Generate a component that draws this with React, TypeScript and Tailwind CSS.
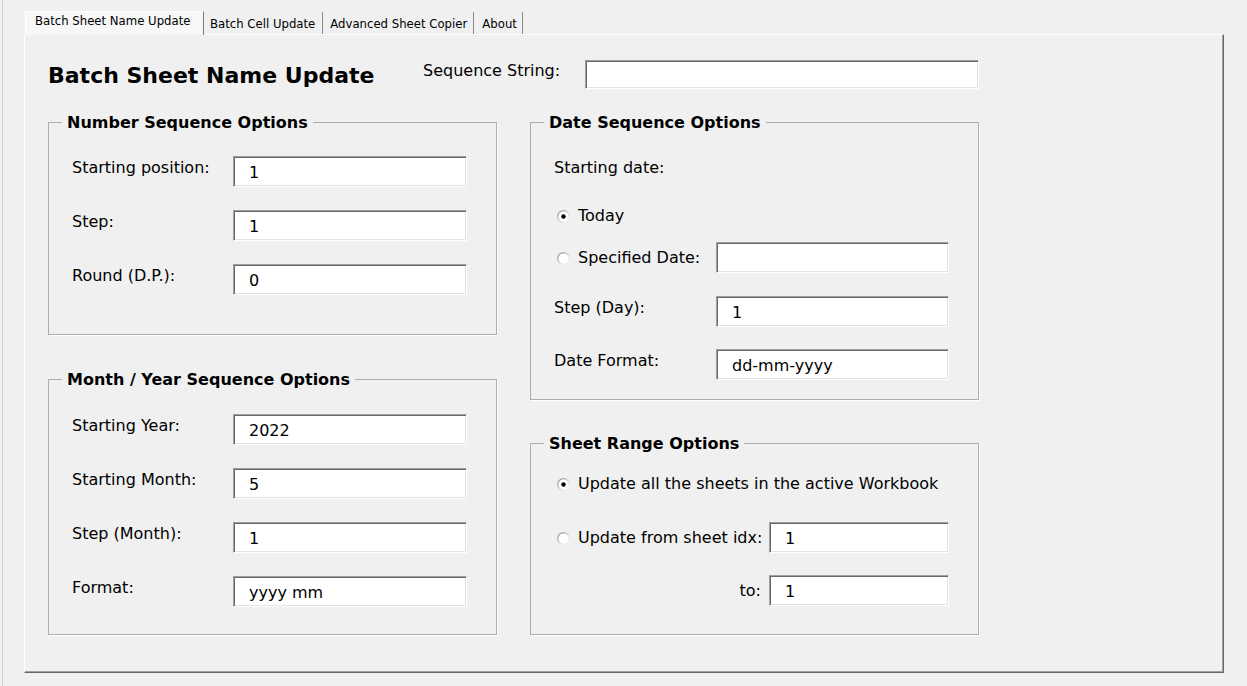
import React from 'react';

const body = 'font-["DejaVu_Sans",sans-serif]';
const tabFont = 'font-["DejaVu_Sans_Condensed","DejaVu_Sans",sans-serif]';

const Field: React.FC<{ value?: string; w?: string; h?: string }> = ({ value = '', w = 'w-[234px]', h = 'h-[31px]' }) => (
  <div
    className={`${h} ${w} shrink-0 bg-white border border-t-[#a0a0a0] border-l-[#a0a0a0] border-b-white border-r-white shadow-[inset_1px_1px_0_#696969,inset_-1px_-1px_0_#e3e3e3] pl-[15px] pt-[2px] flex items-center text-[16px] leading-none text-black`}
  >
    {value}
  </div>
);

const Radio: React.FC<{ checked?: boolean; id: string }> = ({ checked, id }) => (
  <svg width="13" height="13" viewBox="0 0 13 13" className="shrink-0">
    <defs>
      <linearGradient id={id} x1="0" y1="0" x2="1" y2="1">
        <stop offset="0" stopColor="#8a8a8a" />
        <stop offset="0.55" stopColor="#d6d6d6" />
        <stop offset="1" stopColor="#ffffff" />
      </linearGradient>
    </defs>
    <circle cx="6.5" cy="6.5" r="5.8" fill="#fff" stroke={`url(#${id})`} strokeWidth="1.3" />
    {checked && <circle cx="6.5" cy="6.5" r="2.2" fill="#000" />}
  </svg>
);

const Row: React.FC<{ label: string; value: string }> = ({ label, value }) => (
  <div className="flex items-start">
    <span className="w-[161px] mt-[2px] text-[16px] leading-[20px]">{label}</span>
    <Field value={value} />
  </div>
);

const Group: React.FC<{ title: string; className?: string; children: React.ReactNode }> = ({ title, className = '', children }) => (
  <fieldset className={`border border-[#adadad] shadow-[1px_1px_0_#fff] ${className}`}>
    <legend className="relative top-[1px] ml-[13px] px-[5px] text-[16px] font-bold leading-[20px]">{title}</legend>
    {children}
  </fieldset>
);

export default function App() {
  return (
    <div className={`h-[686px] w-[1247px] bg-[#f0f0f0] text-black ${body} overflow-hidden`}>
      <div className="ml-[2px] h-full border-l border-[#d2d2d2] pl-[21px] pt-[10px]">
        {/* Tabs */}
        <div className={`flex items-end h-[24px] text-[13px] leading-none pl-[1px] ${tabFont}`}>
          <div className="relative z-10 h-[24px] w-[179px] -mb-[1px] bg-[#f7f7f7] border-l border-t border-white border-r border-r-[#7a7a7a] pl-[9px] pt-[2px]">
            Batch Sheet Name Update
          </div>
          <div className="h-[22px] border-r border-[#8a8a8a] pl-[6px] pr-[7px] pt-[5px]">Batch Cell Update</div>
          <div className="h-[22px] border-r border-[#8a8a8a] pl-[7px] pr-[6px] pt-[5px]">Advanced Sheet Copier</div>
          <div className="h-[22px] border-r border-[#8a8a8a] pl-[8px] pr-[5px] pt-[5px]">About</div>
        </div>

        {/* Panel */}
        <div className="w-[1200px] h-[639px] border-l border-t border-white border-r border-b border-r-[#696969] border-b-[#696969] shadow-[inset_-1px_-1px_0_#a0a0a0] pl-[23px]">
          <div className="mt-[25px] flex items-center h-[29px]">
            <h1 className="w-[375px] text-[22px] font-bold leading-none mt-[2px]">Batch Sheet Name Update</h1>
            <span className="w-[162px] text-[16px] -mt-[7px]">Sequence String:</span>
            <Field w="w-[394px]" h="h-[29px]" />
          </div>

          <div className="mt-[23px] grid grid-cols-[449px_449px] gap-x-[33px] items-start">
            <div className="flex flex-col">
              <Group title="Number Sequence Options" className="h-[223px]">
                <div className="pl-[23px] pt-[24px] flex flex-col gap-[23px]">
                  <Row label="Starting position:" value="1" />
                  <Row label="Step:" value="1" />
                  <Row label="Round (D.P.):" value="0" />
                </div>
              </Group>
              <Group title="Month / Year Sequence Options" className="h-[266px] mt-[34px]">
                <div className="pl-[23px] pt-[25px] flex flex-col gap-[23px]">
                  <Row label="Starting Year:" value="2022" />
                  <Row label="Starting Month:" value="5" />
                  <Row label="Step (Month):" value="1" />
                  <Row label="Format:" value="yyyy mm" />
                </div>
              </Group>
            </div>

            <div className="flex flex-col">
              <Group title="Date Sequence Options" className="h-[288px]">
                <div className="pl-[23px] pt-[24px] flex flex-col text-[16px]">
                  <div className="h-[31px]">
                    <span className="block mt-[2px] leading-[20px]">Starting date:</span>
                  </div>
                  <div className="mt-[19px] h-[20px] flex items-center gap-[8px] pl-[3px]">
                    <Radio checked id="r1" />
                    <span className="leading-[20px]">Today</span>
                  </div>
                  <div className="mt-[16px] flex items-center">
                    <div className="w-[162px] flex items-center gap-[8px] pl-[3px] pt-[1px]">
                      <Radio id="r2" />
                      <span className="leading-[20px]">Specified Date:</span>
                    </div>
                    <Field w="w-[233px]" />
                  </div>
                  <div className="mt-[23px] flex items-start">
                    <span className="w-[162px] mt-[2px] leading-[20px]">Step (Day):</span>
                    <Field value="1" w="w-[233px]" />
                  </div>
                  <div className="mt-[22px] flex items-start">
                    <span className="w-[162px] mt-[2px] leading-[20px]">Date Format:</span>
                    <Field value="dd-mm-yyyy" w="w-[233px]" />
                  </div>
                </div>
              </Group>
              <Group title="Sheet Range Options" className="h-[202px] mt-[33px]">
                <div className="pl-[23px] pt-[21px] flex flex-col text-[16px]">
                  <div className="h-[20px] flex items-center gap-[8px] pl-[3px]">
                    <Radio checked id="r3" />
                    <span className="leading-[20px]">Update all the sheets in the active Workbook</span>
                  </div>
                  <div className="mt-[28px] flex items-center">
                    <div className="w-[215px] flex items-center gap-[8px] pl-[3px] pt-[1px]">
                      <Radio id="r4" />
                      <span className="leading-[20px]">Update from sheet idx:</span>
                    </div>
                    <Field value="1" w="w-[180px]" />
                  </div>
                  <div className="mt-[22px] flex items-center">
                    <span className="w-[215px] pr-[8px] pt-[1px] text-right leading-[20px]">to:</span>
                    <Field value="1" w="w-[180px]" />
                  </div>
                </div>
              </Group>
            </div>
          </div>
        </div>
      </div>
    </div>
  );
}
